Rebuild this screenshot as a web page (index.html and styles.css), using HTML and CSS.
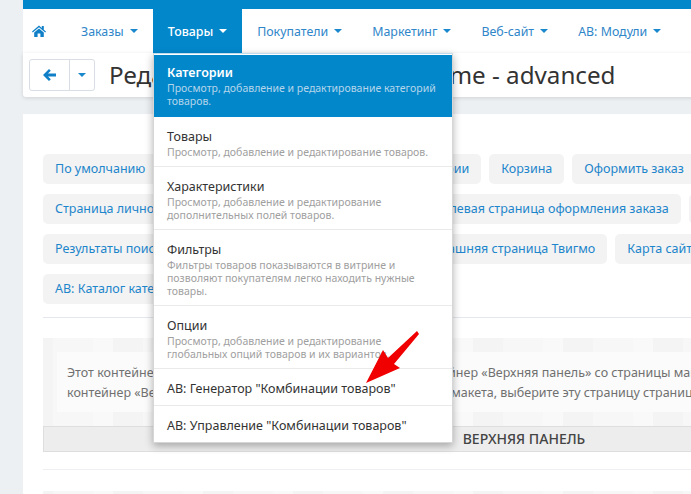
FILE: index.html
```html
<!DOCTYPE html>
<html lang="ru">
<head>
<meta charset="utf-8">
<title>Редактирование макета</title>
<link rel="stylesheet" href="styles.css">
</head>
<body>
<div class="page">
  <div class="topband"></div>
  <nav class="nav">
    <a class="nav-home" href="#"><svg width="14" height="12" viewBox="0 0 14 12"><path fill="#0f80c8" d="M7 .6 0 6.6l.8.9L7 2.2l6.2 5.3.8-.9-2.2-1.9V1h-2v1.9zM2.2 7.6V12h3.4V8.6h2.8V12h3.4V7.6L7 3.5z"/></svg></a>
    <a class="nav-item" href="#">Заказы<i class="caret"></i></a>
    <a class="nav-item active" href="#">Товары<i class="caret"></i></a>
    <a class="nav-item" href="#">Покупатели<i class="caret"></i></a>
    <a class="nav-item" href="#">Маркетинг<i class="caret"></i></a>
    <a class="nav-item" href="#">Веб-сайт<i class="caret"></i></a>
    <a class="nav-item" href="#">АВ: Модули<i class="caret"></i></a>
  </nav>
  <header class="toolbar">
    <div class="btn-group">
      <a class="btn btn-back" href="#"><svg width="13" height="12" viewBox="0 0 13 12"><path fill="#0f80c8" d="M6 0 7.8 1.8 5 4.5h8v3H5l2.8 2.7L6 12 0 6z"/></svg></a>
      <a class="btn btn-drop" href="#"><i class="caret"></i></a>
    </div>
    <h1 class="title">Редактирование: Modern theme - advanced</h1>
  </header>
  <main class="card">
    <div class="tabs">
      <div class="tab-row">
        <a class="tab" href="#">По умолчанию</a>
        <a class="tab" href="#">Страница для товаров</a>
        <a class="tab" href="#">Страница категории</a>
        <a class="tab" href="#">Корзина</a>
        <a class="tab" href="#">Оформить заказ</a>
      </div>
      <div class="tab-row">
        <a class="tab" href="#">Страница личного кабинета</a>
        <a class="tab" href="#">Страница уведомления</a>
        <a class="tab" href="#">Целевая страница оформления заказа</a>
        <a class="tab" href="#">Блог</a>
      </div>
      <div class="tab-row">
        <a class="tab" href="#">Результаты поиска</a>
        <a class="tab" href="#">Страница сравнения и товаров</a>
        <a class="tab" href="#">Домашняя страница Твигмо</a>
        <a class="tab" href="#">Карта сайта</a>
      </div>
      <div class="tab-row">
        <a class="tab" href="#">АВ: Каталог категорий</a>
      </div>
    </div>
    <hr class="rule">
    <section class="grid-area">
      <p class="notice">Этот контейнер не редактируется на этой странице: взят контейнер «Верхняя панель» со страницы макета по умолчанию. Чтобы редактировать<br>контейнер «Верхняя панель» для именно этой страницы этого макета, выберите эту страницу страницей по умолчанию</p>
      <div class="panel-head">ВЕРХНЯЯ ПАНЕЛЬ</div>
    </section>
    <hr class="rule rule-light">
    <section class="grid-area grid-next"></section>
  </main>
  <ul class="menu">
    <li class="menu-item selected"><b>Категории</b><span>Просмотр, добавление и редактирование категорий товаров.</span></li>
    <li class="menu-item"><b>Товары</b><span>Просмотр, добавление и редактирование товаров.</span></li>
    <li class="menu-item"><b>Характеристики</b><span>Просмотр, добавление и редактирование дополнительных полей товаров.</span></li>
    <li class="menu-item"><b>Фильтры</b><span>Фильтры товаров показываются в витрине и позволяют покупателям легко находить нужные товары.</span></li>
    <li class="menu-item"><b>Опции</b><span>Просмотр, добавление и редактирование глобальных опций товаров и их вариантов.</span></li>
    <li class="menu-item"><b>АВ: Генератор "Комбинации товаров"</b></li>
    <li class="menu-item"><b>АВ: Управление "Комбинации товаров"</b></li>
  </ul>
  <svg class="arrow" width="60" height="60" viewBox="0 0 60 60"><path fill="#f00000" d="M6 55 23 22 28 30 57 3 59 6 34 36 40 40z"/></svg>
</div>
</body>
</html>
```
FILE: styles.css
```css
* { box-sizing: border-box; }
html, body { margin: 0; height: 494px; overflow: hidden; }
body { background: #edf0f3; font-family: "Noto Sans", "Open Sans", sans-serif; font-size: 12.5px; color: #333; }
a { text-decoration: none; }
.page { position: relative; width: 1002px; margin-left: 23px; height: 494px; }
.topband { height: 9px; background: #0387cb; }
.nav { display: flex; height: 44px; background: #fff; align-items: stretch; }
.nav-home { width: 43px; padding-left: 9px; display: flex; align-items: center; margin-top: -1px; }
.nav-item { display: flex; align-items: center; padding: 0 15px; color: #2f86c9; white-space: nowrap; font-size: 12.4px; }
.nav-item.active { background: #0387cb; color: #fff; font-weight: 500; }
.caret { display: inline-block; width: 0; height: 0; margin-left: 6px; border: 4px solid transparent; border-top-color: #1a88cc; border-bottom: 0; }
.nav-item.active .caret { border-top-color: #fff; }
.toolbar { display: flex; align-items: center; height: 44px; padding: 0 0 0 6px; background: #fff; box-shadow: 0 1px 4px rgba(0,0,0,.12); border-radius: 0 0 3px 3px; }
.btn-group { display: flex; height: 32px; margin-right: 14px; border: 1px solid #d8dee4; border-radius: 3px; }
.btn { display: flex; align-items: center; justify-content: center; }
.btn-back { width: 40px; border-right: 1px solid #d8dee4; }
.btn-drop { width: 24px; }
.btn-drop .caret { margin: 0; }
.title { margin: 0; font-size: 24.2px; font-weight: 400; line-height: 32px; color: #333; white-space: nowrap; }
.card { margin-top: 17px; height: 400px; padding: 40px 20px 0; background: #fff; }
.tabs { display: flex; flex-direction: column; gap: 10px; }
.tab-row { display: flex; gap: 8px; }
.tab { display: block; height: 30px; padding: 0 12px; line-height: 30px; background: #f3f3f3; border-radius: 5px; color: #1d85cb; white-space: nowrap; }
.rule { height: 1px; margin: 13px 0 20px; border: 0; background: #e4e7ec; }
.rule-light { margin: 17px 0 21px; background: #edeff2; }
.grid-area { height: 114px; padding-top: 14px; background: repeating-linear-gradient(90deg, #f4f4f4 0 10px, #f7f7f7 10px 50px, #f9f9f9 50px 70px, #f4f4f4 70px 90px); }
.grid-next { height: 40px; padding: 0; }
.notice { margin: 0 14px; height: 60px; padding: 11px 10px 9px; background: #fbfbfb; color: #707070; font-size: 12.5px; line-height: 20px; white-space: nowrap; overflow: hidden; }
.panel-head { height: 26px; margin-top: 14px; border: 1px solid #dedede; background: #ededed; font-size: 14px; font-weight: 500; line-height: 24px; text-align: center; color: #444; }
.menu { position: absolute; left: 130px; top: 53px; width: 300px; margin: 0; padding: 1px 0 0; list-style: none; background: #fff; border: 1px solid #d6d6d6; border-top-color: #bfdcef; box-shadow: 0 3px 8px rgba(0,0,0,.3); }
.menu-item { padding: 10px 13px 7px; border-bottom: 1px solid #eaeaea; color: #333; }
.menu-item:last-child { border-bottom: 0; }
.menu-item b { display: block; font-weight: 400; font-size: 12.5px; line-height: 19px; }
.menu-item span { display: block; font-size: 10.5px; line-height: 13px; color: #a0a0a0; }
.menu-item.selected { padding: 9px 13px 9px; background: #0387cb; color: #fff; border-bottom: 0; }
.menu-item.selected b { font-weight: 600; line-height: 18px; }
.menu-item.selected span { color: #b5d5ea; }
.arrow { position: absolute; left: 337px; top: 328px; }
```
